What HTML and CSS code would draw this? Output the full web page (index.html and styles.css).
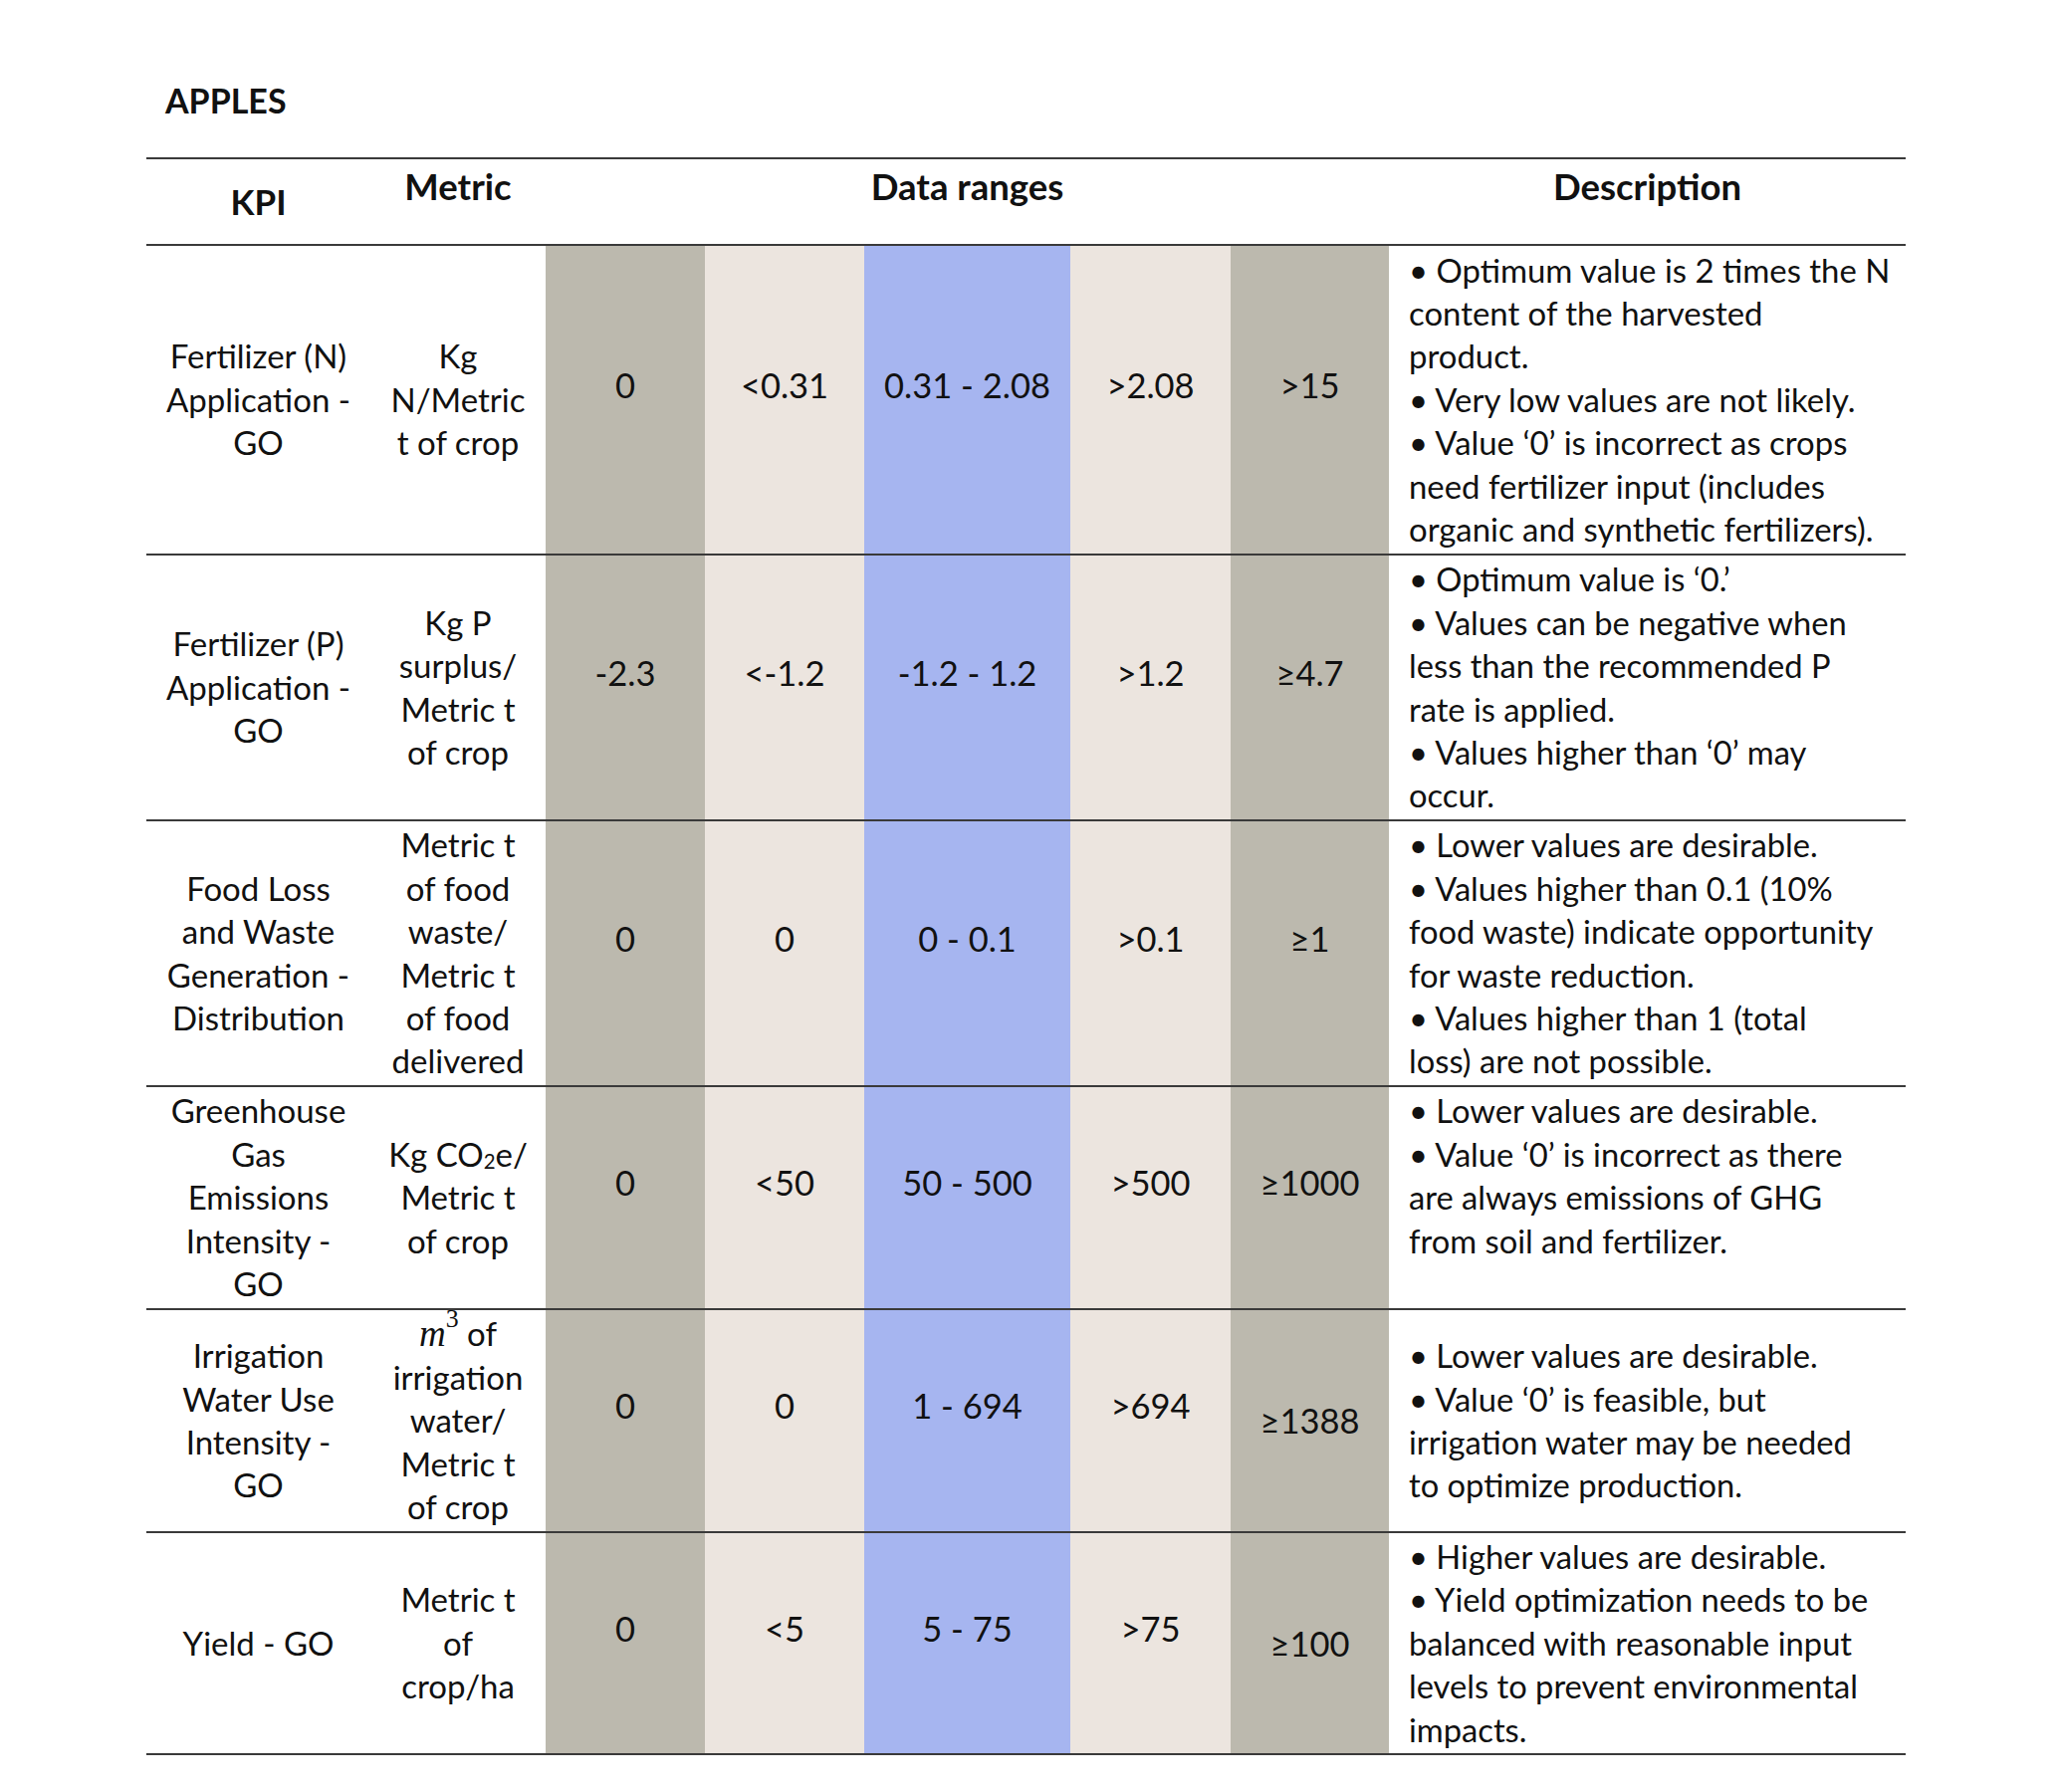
FILE: index.html
```html
<!DOCTYPE html>
<html lang="en">
<head>
<meta charset="utf-8">
<title>APPLES KPI data ranges</title>
<link rel="stylesheet" href="styles.css">
</head>
<body>
<div class="page">
  <h1 class="title">APPLES</h1>
  <table class="kpi-table">
    <colgroup>
      <col class="col-kpi">
      <col class="col-metric">
      <col class="col-r1">
      <col class="col-r2">
      <col class="col-r3">
      <col class="col-r4">
      <col class="col-r5">
      <col class="col-desc">
    </colgroup>
    <thead>
      <tr class="head-row">
        <th class="h-kpi">KPI</th>
        <th class="h-top">Metric</th>
        <th class="h-top" colspan="5">Data ranges</th>
        <th class="h-top">Description</th>
      </tr>
    </thead>
    <tbody>
      <tr class="row-a">
        <td class="kpi">Fertilizer (N)<br>Application -<br>GO</td>
        <td class="metric">Kg<br>N/Metric<br>t of crop</td>
        <td class="val dark">0</td>
        <td class="val light">&lt;0.31</td>
        <td class="val blue">0.31 - 2.08</td>
        <td class="val light">&gt;2.08</td>
        <td class="val dark">&gt;15</td>
        <td class="desc desc-wide">• Optimum value is 2 times the N<br>content of the harvested<br>product.<br>• Very low values are not likely.<br>• Value ‘0’ is incorrect as crops<br>need fertilizer input (includes<br>organic and synthetic fertilizers).</td>
      </tr>
      <tr class="row-b">
        <td class="kpi">Fertilizer (P)<br>Application -<br>GO</td>
        <td class="metric">Kg P<br>surplus/<br>Metric t<br>of crop</td>
        <td class="val dark">-2.3</td>
        <td class="val light">&lt;-1.2</td>
        <td class="val blue">-1.2 - 1.2</td>
        <td class="val light">&gt;1.2</td>
        <td class="val dark">≥4.7</td>
        <td class="desc">• Optimum value is ‘0.’<br>• Values can be negative when<br>less than the recommended P<br>rate is applied.<br>• Values higher than ‘0’ may<br>occur.</td>
      </tr>
      <tr class="row-b">
        <td class="kpi">Food Loss<br>and Waste<br>Generation -<br>Distribution</td>
        <td class="metric">Metric t<br>of food<br>waste/<br>Metric t<br>of food<br>delivered</td>
        <td class="val dark">0</td>
        <td class="val light">0</td>
        <td class="val blue">0 - 0.1</td>
        <td class="val light">&gt;0.1</td>
        <td class="val dark">≥1</td>
        <td class="desc">• Lower values are desirable.<br>• Values higher than 0.1 (10%<br>food waste) indicate opportunity<br>for waste reduction.<br>• Values higher than 1 (total<br>loss) are not possible.</td>
      </tr>
      <tr class="row-c">
        <td class="kpi">Greenhouse<br>Gas<br>Emissions<br>Intensity -<br>GO</td>
        <td class="metric">Kg CO<sub class="sub">2</sub>e/<br>Metric t<br>of crop</td>
        <td class="val dark">0</td>
        <td class="val light">&lt;50</td>
        <td class="val blue">50 - 500</td>
        <td class="val light">&gt;500</td>
        <td class="val dark">≥1000</td>
        <td class="desc">• Lower values are desirable.<br>• Value ‘0’ is incorrect as there<br>are always emissions of GHG<br>from soil and fertilizer.<br>&nbsp;</td>
      </tr>
      <tr class="row-c">
        <td class="kpi">Irrigation<br>Water Use<br>Intensity -<br>GO</td>
        <td class="metric"><span class="math">m<sup class="sup">3</sup></span> of<br>irrigation<br>water/<br>Metric t<br>of crop</td>
        <td class="val dark">0</td>
        <td class="val light">0</td>
        <td class="val blue">1 - 694</td>
        <td class="val light">&gt;694</td>
        <td class="val dark mid">≥1388</td>
        <td class="desc">• Lower values are desirable.<br>• Value ‘0’ is feasible, but<br>irrigation water may be needed<br>to optimize production.</td>
      </tr>
      <tr class="row-d">
        <td class="kpi">Yield - GO</td>
        <td class="metric">Metric t<br>of<br>crop/ha</td>
        <td class="val dark">0</td>
        <td class="val light">&lt;5</td>
        <td class="val blue">5 - 75</td>
        <td class="val light">&gt;75</td>
        <td class="val dark mid">≥100</td>
        <td class="desc">• Higher values are desirable.<br>• Yield optimization needs to be<br>balanced with reasonable input<br>levels to prevent environmental<br>impacts.</td>
      </tr>
    </tbody>
  </table>
</div>
</body>
</html>
```
FILE: styles.css
```css
html, body {
  margin: 0;
  padding: 0;
  background: #ffffff;
}

body {
  font-family: "Lato", "Open Sans", "Liberation Sans", sans-serif;
  color: #111111;
}

.page {
  padding: 79px 0 40px 147px;
}

.title {
  margin: 0 0 36px 19px;
  font-size: 34px;
  line-height: 43px;
  font-weight: 700;
}

.kpi-table {
  width: 1767px;
  border-collapse: collapse;
  table-layout: fixed;
}

.col-kpi { width: 225px; }
.col-metric { width: 176px; }
.col-r1 { width: 160px; }
.col-r2 { width: 160px; }
.col-r3 { width: 207px; }
.col-r4 { width: 161px; }
.col-r5 { width: 159px; }
.col-desc { width: 519px; }

.kpi-table th,
.kpi-table td {
  padding: 0;
  text-align: center;
  border-bottom: 2px solid #3a3a3a;
  white-space: nowrap;
}

.kpi-table th {
  border-top: 2px solid #3a3a3a;
  font-size: 36.5px;
  line-height: 43.4px;
  font-weight: 700;
}

.head-row { height: 87px; }
.row-a { height: 311px; }
.row-b { height: 267px; }
.row-c { height: 224px; }
.row-d { height: 223px; }

.kpi-table .h-kpi { vertical-align: middle; font-size: 35px; }
.kpi-table .h-top { vertical-align: top; padding-top: 6px; }

.kpi-table .kpi,
.kpi-table .metric {
  font-size: 33px;
  line-height: 43.4px;
  vertical-align: middle;
}

.kpi-table .val {
  font-size: 34.5px;
  line-height: 43.4px;
  vertical-align: middle;
  padding-bottom: 30px;
}

.kpi-table .val.mid { padding-bottom: 0; }

.dark { background: #bcb9ae; }
.light { background: #ece5df; }
.blue { background: #a6b5f0; }

.kpi-table .desc {
  text-align: left;
  padding-left: 20px;
  font-size: 32.7px;
  line-height: 43.4px;
  vertical-align: middle;
}

.kpi-table .desc-wide { font-size: 32.9px; }

.sub {
  font-size: 0.62em;
  line-height: 0;
  vertical-align: -0.12em;
}

.math {
  font-family: "Liberation Serif", "DejaVu Serif", serif;
  font-style: italic;
  font-size: 1.12em;
}

.sup {
  font-style: normal;
  font-size: 0.7em;
  line-height: 0;
  vertical-align: 0.72em;
}
```
